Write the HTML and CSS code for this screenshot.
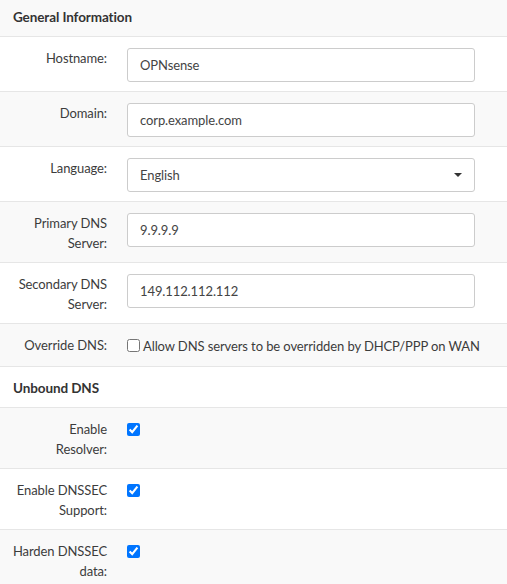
FILE: index.html
```html
<!DOCTYPE html>
<html>
<head>
<meta charset="utf-8">
<link rel="stylesheet" href="styles.css">
</head>
<body>
<div class="table">
  <div class="row head"><div class="title">General Information</div></div>
  <div class="row">
    <div class="label">Hostname:</div>
    <div class="field"><div class="input">OPNsense</div></div>
  </div>
  <div class="row">
    <div class="label">Domain:</div>
    <div class="field"><div class="input">corp.example.com</div></div>
  </div>
  <div class="row">
    <div class="label">Language:</div>
    <div class="field"><div class="input select"><span>English</span><span class="caret"></span></div></div>
  </div>
  <div class="row">
    <div class="label">Primary DNS<br>Server:</div>
    <div class="field"><div class="input">9.9.9.9</div></div>
  </div>
  <div class="row">
    <div class="label">Secondary DNS<br>Server:</div>
    <div class="field"><div class="input">149.112.112.112</div></div>
  </div>
  <div class="row">
    <div class="label">Override DNS:</div>
    <div class="field check"><label class="cb"><input type="checkbox"><span>Allow DNS servers to be overridden by DHCP/PPP on WAN</span></label></div>
  </div>
  <div class="row head"><div class="title">Unbound DNS</div></div>
  <div class="row">
    <div class="label">Enable<br>Resolver:</div>
    <div class="field check"><label class="cb"><input type="checkbox" checked></label></div>
  </div>
  <div class="row">
    <div class="label">Enable DNSSEC<br>Support:</div>
    <div class="field check"><label class="cb"><input type="checkbox" checked></label></div>
  </div>
  <div class="row">
    <div class="label">Harden DNSSEC<br>data:</div>
    <div class="field check"><label class="cb"><input type="checkbox" checked></label></div>
  </div>
</div>
</body>
</html>
```
FILE: styles.css
```css
html, body {
  margin: 0;
  padding: 0;
  background: #fff;
}
body {
  font-family: "Lato", "Liberation Sans", sans-serif;
  font-size: 13px;
  letter-spacing: -0.1px;
  color: #3c3c3c;
  overflow: hidden;
}
.table {
  margin-top: -4px;
}
.row {
  display: grid;
  grid-template-columns: 107px 348px;
  column-gap: 20px;
  padding: 11px 0 9px;
  border-bottom: 1px solid #e6e6e6;
  line-height: 20px;
}
.row:nth-child(odd) {
  background: #f9f9f9;
}
.row.head {
  display: block;
  padding: 11px 13px 9px;
  font-size: 13.5px;
}
.title {
  font-weight: bold;
  color: #333;
}
.label {
  text-align: right;
  white-space: nowrap;
}
.input {
  box-sizing: border-box;
  height: 34px;
  border: 1px solid #ccc;
  border-radius: 3px;
  background: #fff;
  padding: 0 12px;
  line-height: 32px;
  color: #444;
}
.select {
  display: flex;
  justify-content: space-between;
  align-items: center;
}
.caret {
  width: 0;
  height: 0;
  border-left: 4px solid transparent;
  border-right: 4px solid transparent;
  border-top: 4px solid #333;
  margin-right: 0;
}
.check {
  min-height: 22px;
}
.cb {
  display: flex;
  align-items: flex-start;
  white-space: nowrap;
}
.cb input {
  width: 13px;
  height: 13px;
  margin: 4px 3px 0 0;
}
.cb span {
  line-height: 22px;
}
```
